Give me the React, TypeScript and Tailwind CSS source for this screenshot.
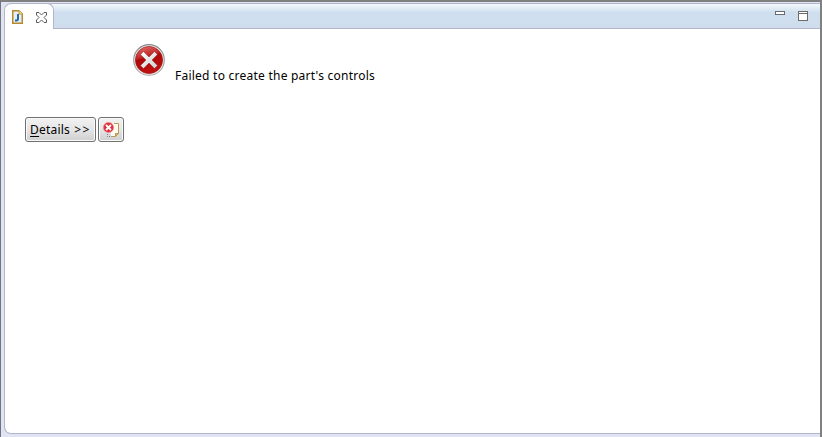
function FileIcon() {
  return (
    <svg width="11" height="14" viewBox="0 0 11 14" className="mt-[10px] ml-[7px] shrink-0">
      <path d="M.75 .75H7L10.25 4V13.25H.75Z" fill="#e3effa" stroke="#b8892d" strokeWidth="1.5" />
      <path d="M7 .5V4H10.5" fill="#f3d58c" stroke="#c79b43" />
      <path d="M6 4V8.8Q6 10.5 4.5 10.5H3" fill="none" stroke="#2869a6" strokeWidth="2" />
    </svg>
  );
}

function CloseIcon() {
  return (
    <svg width="11" height="11" viewBox="0 0 11 11" className="mt-[12px] ml-[13px] shrink-0">
      <path d="M.5 .5H3L5.5 3L8 .5H10.5V3L8 5.5L10.5 8V10.5H8L5.5 8L3 10.5H.5V8L3 5.5L.5 3Z" fill="#fff" stroke="#5c5c5c" />
    </svg>
  );
}

function ErrorIcon() {
  return (
    <svg width="34" height="34" viewBox="0 0 34 34" className="mt-[15px] ml-[127px] shrink-0">
      <defs>
        <linearGradient id="red" x1="0" y1="0" x2="0.3" y2="1">
          <stop offset="0" stopColor="#df7772" />
          <stop offset=".42" stopColor="#c32a2a" />
          <stop offset=".5" stopColor="#ad0808" />
          <stop offset="1" stopColor="#bf1010" />
        </linearGradient>
        <linearGradient id="rim" x1="0" y1="0" x2="0" y2="1">
          <stop offset="0" stopColor="#858585" />
          <stop offset="1" stopColor="#b5b5b5" />
        </linearGradient>
        <linearGradient id="cross" x1="0" y1="0" x2="1" y2="1">
          <stop offset="0" stopColor="#fff" />
          <stop offset="1" stopColor="#ccd0d0" />
        </linearGradient>
      </defs>
      <circle cx="17" cy="16" r="15.3" fill="#eee" stroke="url(#rim)" strokeWidth="1.2" />
      <circle cx="17" cy="16" r="13.6" fill="url(#red)" stroke="#a31515" strokeWidth=".7" />
      <path d="M11.5 7.5L17 13L22.5 7.5L25.5 10.5L20 16L25.5 21.5L22.5 24.5L17 19L11.5 24.5L8.5 21.5L14 16L8.5 10.5Z" fill="url(#cross)" stroke="#921d1d" strokeWidth=".4" strokeLinejoin="round" />
    </svg>
  );
}

function LogIcon() {
  return (
    <svg width="16" height="16" viewBox="0 0 16 16" className="shrink-0">
      <path d="M10 1.5H15.5V11.5L12.5 14.5H8V5Z" fill="#fffaf0" />
      <path d="M11 1.5H15.5V11.5L12.5 14.5H8" fill="none" stroke="#b99b55" />
      <path d="M12.5 14.5V11.5H15.5Z" fill="#dfbd69" stroke="#b99b55" />
      <path d="M4.5 12V14.5H8" fill="none" stroke="#527aa2" strokeDasharray="1 1" />
      <circle cx="5.5" cy="5.5" r="5.1" fill="#e0303d" stroke="#ed8990" strokeWidth=".7" />
      <path d="M3 3L8 8M8 3L3 8" stroke="#fff" strokeWidth="1.8" />
    </svg>
  );
}

const buttonStyle =
  "flex items-center justify-center rounded-[3px] border border-[#707070] bg-linear-to-b from-[#f2f2f2] via-[#e5e5e5] to-[#cfcfcf] shadow-[inset_0_0_0_1px_#fafafa]";

export default function App() {
  return (
    <div className="relative flex h-[437px] w-[822px] overflow-hidden border-t-2 border-r-2 border-l border-t-[#808080] border-r-[#808080] border-l-[#70747f] bg-[#dfe3f2] pt-px pb-[3px] pl-[3px] font-['Noto_Sans','Open_Sans',sans-serif] text-[12px] text-black">
      <main className="h-[431px] w-[816px] overflow-hidden rounded-tl-[7px] rounded-bl-[7px] border-y border-l border-[#b3b6ca] bg-white">
        <header className="flex h-[25px] border-b border-[#b3b6ca] bg-linear-to-b from-[#f4f9fd] via-[#cfdfef] via-35% to-[#cfddec]">
          <div className="-mt-px flex h-[26px] w-[49px] shrink-0 rounded-t-[7px] border-t border-r border-[#b3b6ca] bg-white">
            <div className="-mt-[4px] flex"><FileIcon /><CloseIcon /></div>
          </div>
          <div className="ml-auto flex pr-[12px]">
            <svg width="33" height="12" viewBox="0 0 33 12" className="mt-[7px]" shapeRendering="crispEdges">
              <path d="M.5 .5H9.5V3.5H.5Z" fill="#fff" stroke="#6b6b6b" />
              <path d="M23.5 .5H32.5V9.5H23.5ZM23.5 2.5H32.5" fill="#fff" stroke="#6b6b6b" />
            </svg>
          </div>
        </header>
        <div className="flex h-[88px]">
          <ErrorIcon />
          <span className="mt-[38px] ml-[9px] text-[12px] leading-[18px] tracking-[0.24px] whitespace-nowrap">Failed to create the part's controls</span>
        </div>
        <div className="ml-[20px] flex gap-[2px]">
          <button className={`${buttonStyle} h-[25px] w-[71px] tracking-[0.2px]`}>
            <span className="whitespace-pre"><u className="underline-offset-2">D</u>etails <span className="ml-px tracking-[1.4px]">&gt;&gt;</span></span>
          </button>
          <button aria-label="Show error log" className={`${buttonStyle} h-[25px] w-[26px]`}><LogIcon /></button>
        </div>
      </main>
      <div className="absolute top-[118px] -left-px h-[18px] w-px bg-linear-to-b from-[#8b1018] via-[#666] to-[#a00824]" />
      <div className="absolute top-[225px] -left-px flex h-[15px] w-px flex-col justify-between">
        <i className="h-px bg-black" /><i className="h-px bg-black" /><i className="h-px bg-black" /><i className="h-px bg-black" />
      </div>
    </div>
  );
}
